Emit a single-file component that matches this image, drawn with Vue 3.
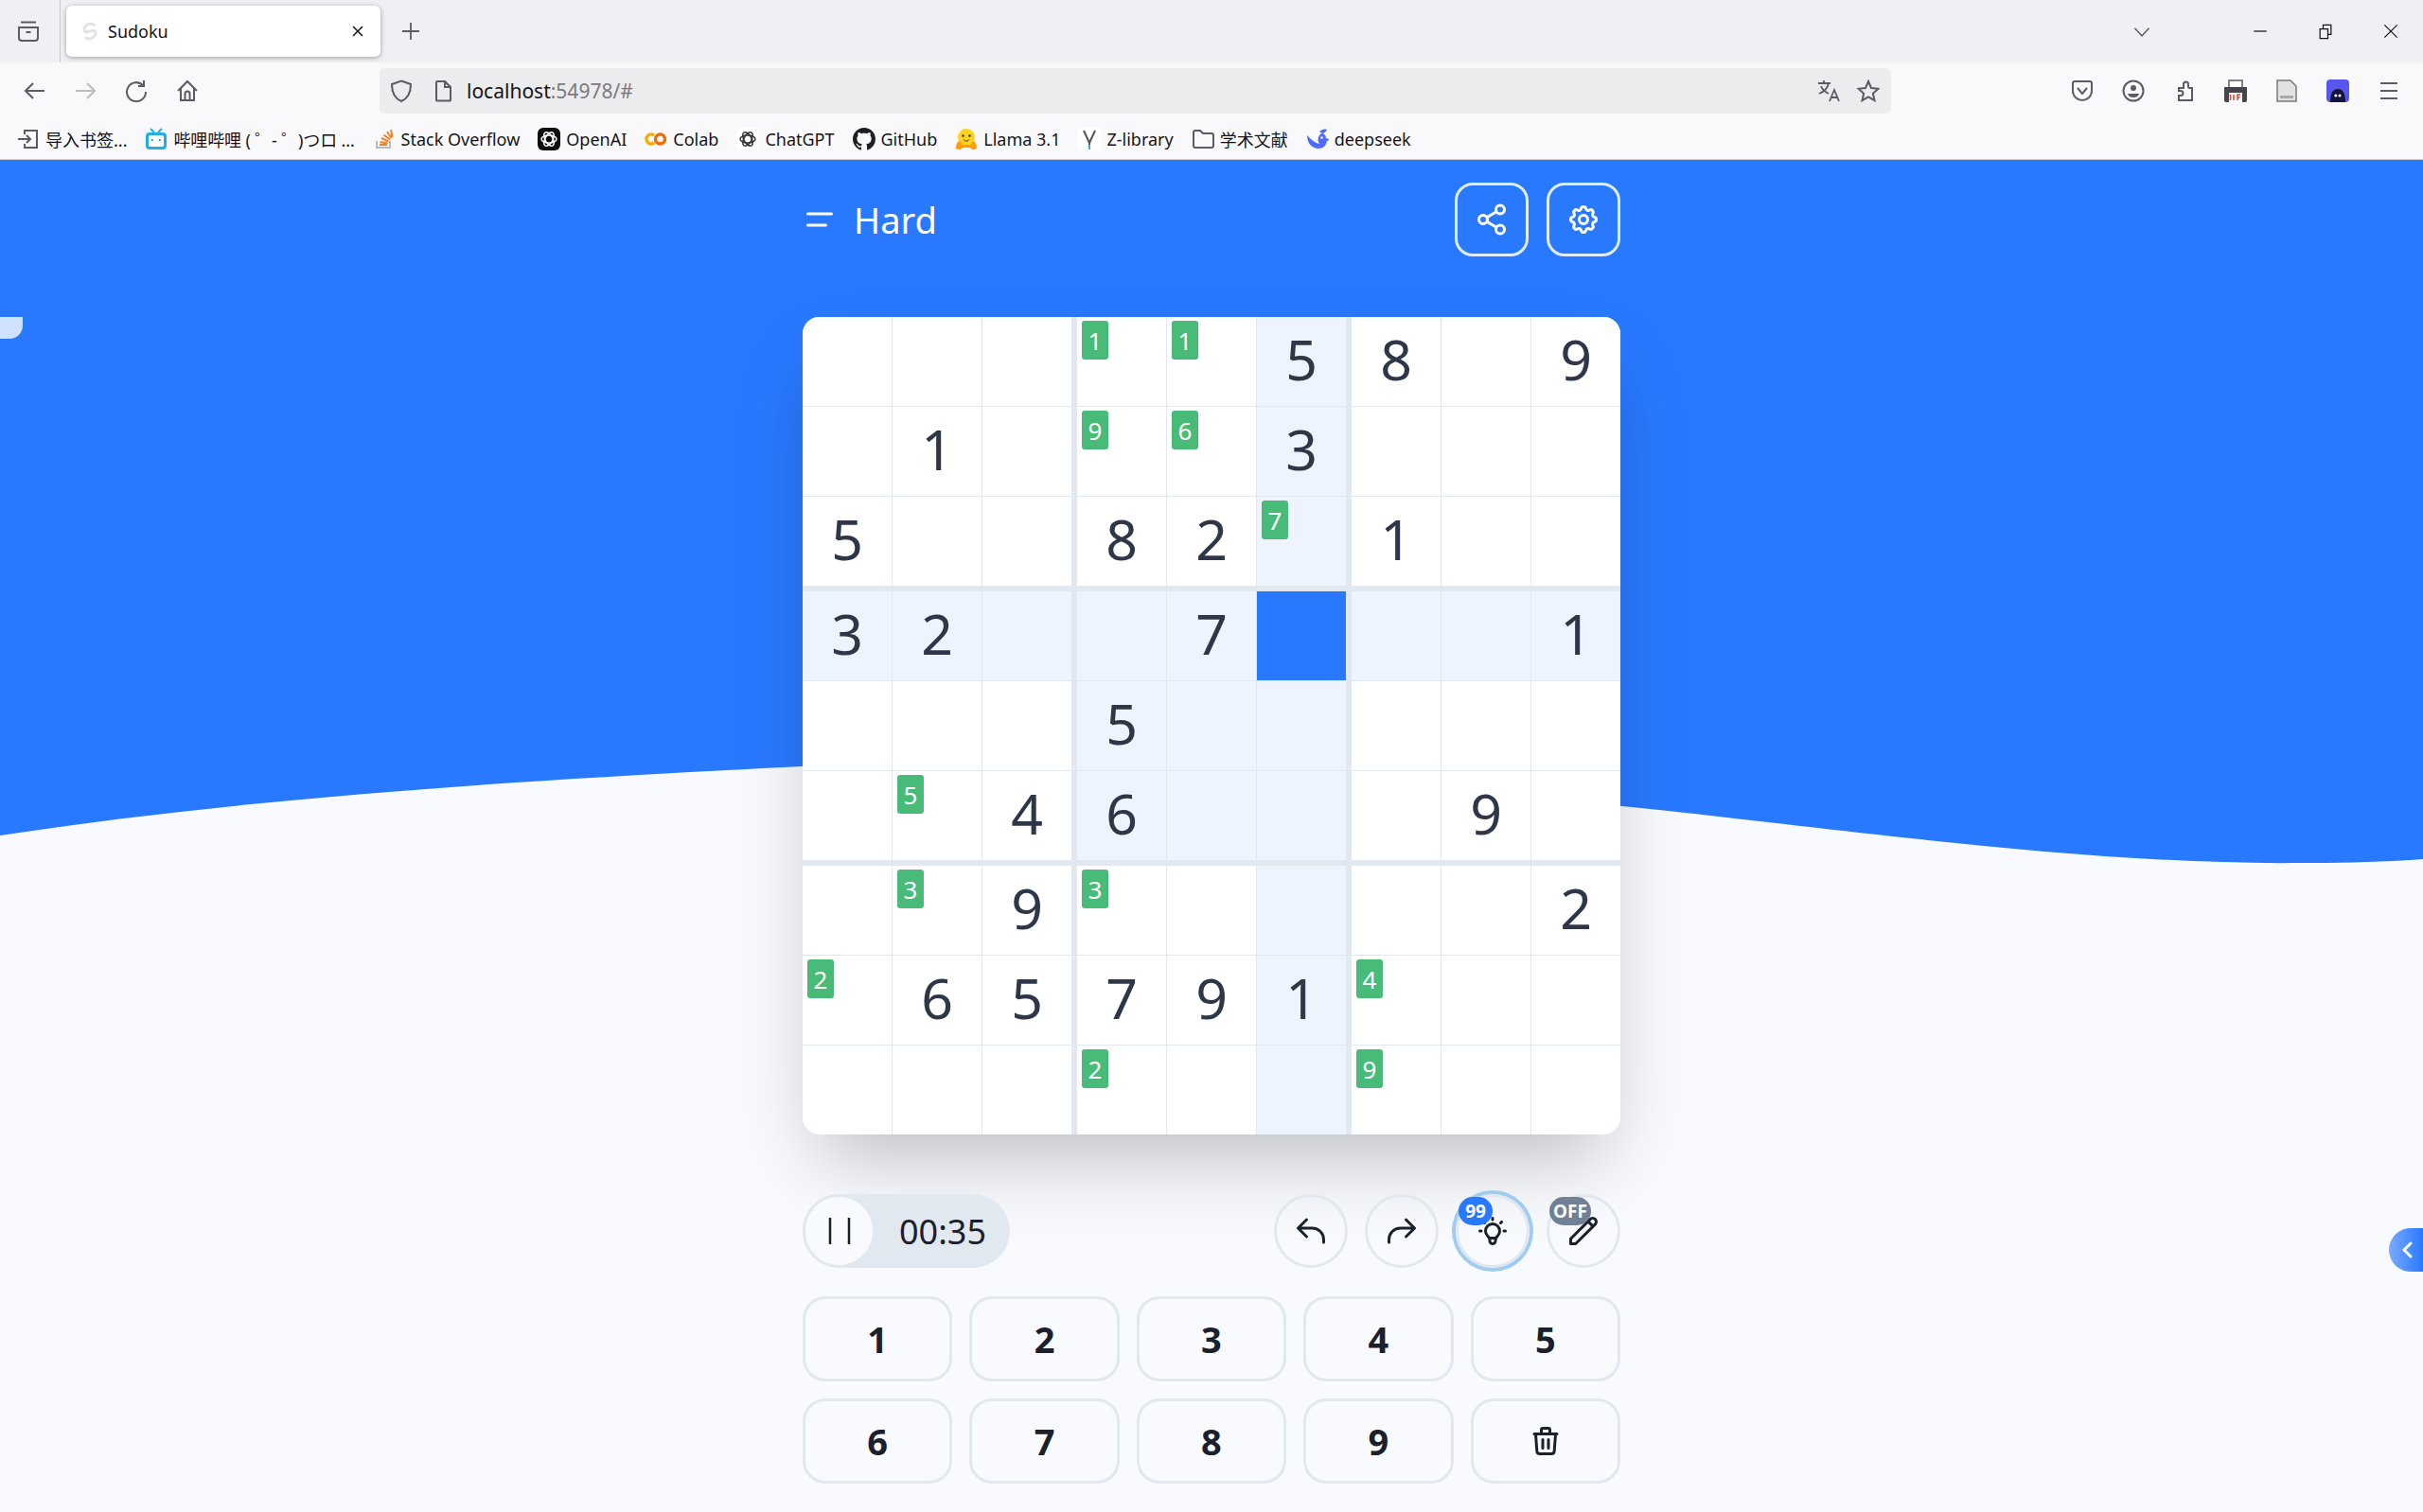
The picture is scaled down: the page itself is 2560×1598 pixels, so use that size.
<template>
  <div class="window">
    <div class="tabstrip">
      <svg class="ico" viewBox="0 0 24 24" fill="none" stroke="#5b5b66" stroke-width="2">
        <path d="M4 2.500h16M2 8h20v11a3 3 0 0 1-3 3H5a3 3 0 0 1-3-3zM9.500 13h5" />
      </svg>
      <div class="divider"></div>
      <div class="tab">
        <svg class="favicon" viewBox="0 0 24 24" fill="none" stroke="#e3e3e6" stroke-width="3.600">
          <path d="M18 5C15 1 10 2 7 5 4 7 4 11 7 13L17 11C20 13 20 17 17 19 14 22 9 23 6 19" />
        </svg>
        <span class="tab-title">Sudoku</span>
        <svg class="tab-close" viewBox="0 0 24 24" fill="none" stroke="#15141a" stroke-width="1.800">
          <path d="M6 6l12 12M18 6 6 18" />
        </svg>
      </div>
      <svg class="ico new-tab" viewBox="0 0 24 24" fill="none" stroke="#5b5b66" stroke-width="1.800">
        <path d="M12 3v18M3 12h18" />
      </svg>
      <div class="spacer"></div>
      <svg class="ico tab-list" viewBox="0 0 24 24" fill="none" stroke="#5b5b66" stroke-width="1.800">
        <path d="M3 8l9 10 9-10" />
      </svg>
      <div class="window-btns">
        <svg class="ico" viewBox="0 0 24 24" fill="none" stroke="#15141a" stroke-width="1.500">
          <path d="M4 12h16" />
        </svg>
        <svg class="ico" viewBox="0 0 24 24" fill="none" stroke="#15141a" stroke-width="1.500">
          <path d="M5 9h10v12H5zM9 9V4h10v12h-4" />
        </svg>
        <svg class="ico" viewBox="0 0 24 24" fill="none" stroke="#15141a" stroke-width="1.500">
          <path d="M4 4l16 16M20 4 4 20" />
        </svg>
      </div>
    </div>

    <div class="toolbar">
      <div class="nav-btns">
        <svg class="ico" viewBox="0 0 24 24" fill="none" stroke="#5b5b66" stroke-width="2">
          <path d="M23 12H3M11 4l-8 8 8 8" />
        </svg>
        <svg class="ico" viewBox="0 0 24 24" fill="none" stroke="#bbbbc0" stroke-width="2">
          <path d="M2 12h20M14 4l8 8-8 8" />
        </svg>
        <svg class="ico" viewBox="0 0 24 24" fill="none" stroke="#5b5b66" stroke-width="2">
          <path d="M19 6A10 10 0 1 0 22 13M20 1v6h-6" />
        </svg>
        <svg class="ico" viewBox="0 0 24 24" fill="none" stroke="#5b5b66" stroke-width="2">
          <path d="M2 12 12 2l10 10M5 9v13h14V9M9.500 22v-7a2.500 2.500 0 0 1 5 0v7" />
        </svg>
      </div>
      <div class="urlbar">
        <svg class="ico" viewBox="0 0 24 24" fill="none" stroke="#5b5b66" stroke-width="2">
          <path d="M12 1.500 22 5c0 9-3 15-10 18C5 20 2 14 2 5z" />
        </svg>
        <svg class="ico page-ico" viewBox="0 0 24 24" fill="none" stroke="#5b5b66" stroke-width="2">
          <path d="M5 3a1 1 0 0 1 1-1h8l6 6v13a1 1 0 0 1-1 1.500H6a1 1 0 0 1-1-1.500zM14 2v6h6" />
        </svg>
        <span class="url"><b>localhost</b>:54978/#</span>
        <div class="spacer"></div>
        <svg class="ico" viewBox="0 0 24 24" fill="none" stroke="#5b5b66" stroke-width="1.800">
          <path d="M1 4h13M7 1v3M12 4c-1 5-5 9-10 11M4 7c1 3 4 6 8 8M13 23l5-12 5 12M15 19h6" />
        </svg>
        <svg class="ico star-ico" viewBox="0 0 24 24" fill="none" stroke="#5b5b66" stroke-width="2">
          <path d="m12 2 3 7 7.500.8-5.600 5 1.600 7.400L12 18.500l-6.500 3.700 1.600-7.400-5.600-5L9 9z" />
        </svg>
      </div>
      <div class="ext-btns">
        <svg class="ico" viewBox="0 0 24 24" fill="none" stroke="#5b5b66" stroke-width="2">
          <path d="M2 4a2 2 0 0 1 2-2h16a2 2 0 0 1 2 2v8c0 6-5 10-10 10S2 18 2 12zM7 9l5 6 5-6" />
        </svg>
        <svg class="ico" viewBox="0 0 24 24" fill="none" stroke="#5b5b66" stroke-width="2">
          <circle cx="12" cy="12" r="10.500" />
          <circle cx="12" cy="9" r="3" fill="#5b5b66" stroke="none" />
          <path d="M6 15h12c-1 3-3 4-6 4s-5-1-6-4z" fill="#5b5b66" stroke="none" />
        </svg>
        <svg class="ico" viewBox="0 0 24 24" fill="none" stroke="#5b5b66" stroke-width="2">
          <path d="M6 9h5V5a2.500 2.500 0 0 1 5 0v3c0 1 .5 1 1.500 1H20v13H6v-5h2a2.500 2.500 0 0 0 0-5H6z" />
        </svg>
        <svg class="ico" viewBox="0 0 24 24">
          <path d="M5 1h14v9H5z" fill="#fff" stroke="#5b5b66" stroke-width="1.500" />
          <path d="M0 8h24v14a2 2 0 0 1-2 2H2a2 2 0 0 1-2-2z" fill="#45454c" />
          <path d="M5 14h14v10H5z" fill="#fff" />
          <path d="M6.500 22v-6M10 22v-6M14 22v-6h3M14 19h2.500" stroke="#e5402f" stroke-width="1.500" fill="none" />
        </svg>
        <svg class="ico" viewBox="0 0 24 24">
          <path d="M2 1h14l6 6v16H2z" fill="#e2e2e4" stroke="#77777f" stroke-width="1.500" />
          <path d="M5 17h14v3H5z" fill="#a9a9ad" />
        </svg>
        <svg class="ico" viewBox="0 0 24 24">
          <rect width="24" height="24" rx="4" fill="#5a55ec" />
          <path d="M4 24c0-10 3-14 8-14s8 4 8 14z" fill="#14143c" />
          <circle cx="9.800" cy="17" r="1.500" fill="#fff" />
          <circle cx="14" cy="17" r="1.500" fill="#fff" />
        </svg>
        <svg class="ico" viewBox="0 0 24 24" fill="none" stroke="#5b5b66" stroke-width="2">
          <path d="M3 4h18M3 12h18M3 20h18" />
        </svg>
      </div>
    </div>

    <div class="bookmarks">
      <div class="bm">
        <svg class="ico" viewBox="0 0 24 24" fill="none" stroke="#5b5b66" stroke-width="2">
          <path d="M8 7V3h13v18H8v-4M1 12h13M10 8l4 4-4 4" />
        </svg>
        <span>导入书签...</span>
      </div>
      <div class="bm">
        <svg class="ico" viewBox="0 0 24 24">
          <path d="M6 1l4 4M18 1l-4 4" stroke="#23ade5" stroke-width="2" />
          <rect x="1" y="5" width="22" height="18" rx="4" fill="#23ade5" />
          <rect x="4" y="8" width="16" height="12" rx="1.500" fill="#fff" />
          <path d="M8 12v2M16 12v2" stroke="#23ade5" stroke-width="2" />
        </svg>
        <span class="bili">哔哩哔哩 ( ゜- ゜)つロ ...</span>
      </div>
      <div class="bm">
        <svg class="ico" viewBox="0 0 24 24" fill="none">
          <path d="M4 14v7h14v-7" stroke="#bcbbbb" stroke-width="2" />
          <path d="M7 18h8M7.500 15l8 1.500M9 11l7.500 3.500M11.500 7.500l6.500 5M15 4l4.500 7M19 2l1.500 8" stroke="#f48024" stroke-width="2" />
        </svg>
        <span>Stack Overflow</span>
      </div>
      <div class="bm">
        <svg class="ico" viewBox="0 0 24 24" fill="none" stroke="#fff" stroke-width="1.500">
          <rect width="24" height="24" rx="6" fill="#0d0d0d" stroke="none" />
          <ellipse cx="12" cy="12" rx="8" ry="4" />
          <ellipse cx="12" cy="12" rx="8" ry="4" transform="rotate(60 12 12)" />
          <ellipse cx="12" cy="12" rx="8" ry="4" transform="rotate(120 12 12)" />
        </svg>
        <span>OpenAI</span>
      </div>
      <div class="bm">
        <svg class="ico" viewBox="0 0 24 24" fill="none" stroke-width="3.500">
          <path d="M10 8a5 5 0 1 0 0 8" stroke="#f9ab00" />
          <circle cx="16.500" cy="12" r="5" stroke="#e8710a" />
        </svg>
        <span>Colab</span>
      </div>
      <div class="bm">
        <svg class="ico" viewBox="0 0 24 24" fill="none" stroke="#333" stroke-width="1.500">
          <rect width="24" height="24" rx="4" fill="#fff" stroke="none" />
          <ellipse cx="12" cy="12" rx="8" ry="4" />
          <ellipse cx="12" cy="12" rx="8" ry="4" transform="rotate(60 12 12)" />
          <ellipse cx="12" cy="12" rx="8" ry="4" transform="rotate(120 12 12)" />
        </svg>
        <span>ChatGPT</span>
      </div>
      <div class="bm">
        <svg class="ico" viewBox="0 0 16 16" fill="#1b1f23">
          <path d="M8 0C3.580 0 0 3.580 0 8c0 3.540 2.290 6.530 5.470 7.590.4.07.55-.17.55-.38 0-.19-.01-.82-.01-1.490-2.010.37-2.530-.49-2.690-.94-.09-.23-.48-.94-.82-1.130-.28-.15-.68-.52-.01-.53.63-.01 1.080.58 1.230.82.72 1.210 1.870.87 2.330.66.07-.52.28-.87.51-1.070-1.780-.2-3.640-.89-3.640-3.950 0-.87.31-1.590.82-2.150-.08-.2-.36-1.020.08-2.120 0 0 .67-.21 2.200.82.64-.18 1.320-.27 2-.27.68 0 1.360.09 2 .27 1.530-1.040 2.200-.82 2.200-.82.44 1.100.16 1.920.08 2.120.51.56.82 1.270.82 2.150 0 3.070-1.870 3.750-3.650 3.950.29.25.54.73.54 1.480 0 1.070-.01 1.930-.01 2.200 0 .21.15.46.55.38A8.013 8.013 0 0016 8c0-4.420-3.580-8-8-8z" />
        </svg>
        <span>GitHub</span>
      </div>
      <div class="bm">
        <svg class="ico" viewBox="0 0 24 24">
          <circle cx="12" cy="10" r="9" fill="#ffd21e" />
          <path d="M1 22c0-5 2-8 4-8l3 4 8 0 3-4c2 0 4 3 4 8-3 2-6 1-7-1H8c-1 2-4 3-7 1z" fill="#ff9d0b" />
          <circle cx="8.500" cy="8.500" r="1.300" fill="#3a3b45" />
          <circle cx="15.500" cy="8.500" r="1.300" fill="#3a3b45" />
          <path d="M9 12.500c1.500 2 4.500 2 6 0" stroke="#3a3b45" fill="none" />
        </svg>
        <span>Llama 3.1</span>
      </div>
      <div class="bm">
        <svg class="ico" viewBox="0 0 24 24" fill="none" stroke-width="2">
          <rect width="24" height="24" rx="2" fill="#fff" />
          <path d="M6 3l6 13 6-13M12 16v2" stroke="#555" />
          <path d="M12 18v5" stroke="#3fa9d0" />
        </svg>
        <span>Z-library</span>
      </div>
      <div class="bm">
        <svg class="ico" viewBox="0 0 24 24" fill="none" stroke="#5b5b66" stroke-width="2">
          <path d="M2 5a2 2 0 0 1 2-2h5l3 3h9a2 2 0 0 1 2 2v11a2 2 0 0 1-2 2H4a2 2 0 0 1-2-2z" />
        </svg>
        <span>学术文献</span>
      </div>
      <div class="bm">
        <svg class="ico" viewBox="0 0 24 24">
          <path d="M1 8c0 9 6 14 12 14 5 0 8-3 9-8 1 0 2-1 2-2l-3-1c0-3-2-5-5-5l-2 2c-2 3-2 6 0 9-5-1-8-4-13-9z" fill="#4d6bfe" />
          <path d="M14 4c2-2 5-3 8-2-1 2-3 4-5 4z" fill="#4d6bfe" />
          <circle cx="16.500" cy="10.500" r="1.200" fill="#fff" />
        </svg>
        <span>deepseek</span>
      </div>
    </div>

    <div class="page">
      <svg class="wave" viewBox="0 1 2560 1429" preserveAspectRatio="none">
        <path d="M0 0H2560V740C2520 743 2470 744 2433 744 2200 747 1900 702 1713 684 1420 607 1100 622 847 642 600 654 280 672 0 715Z" fill="#2979ff" />
      </svg>
      <div class="side-blob"></div>
      <div class="side-tab">
        <svg viewBox="0 0 24 24" fill="none" stroke="#fff" stroke-width="3" stroke-linecap="round" stroke-linejoin="round">
          <path d="M15 5l-7 7 7 7" />
        </svg>
      </div>

      <div class="game">
        <header class="game-head">
          <svg class="menu-ico" viewBox="0 0 28 16" fill="none" stroke="#fff" stroke-width="3" stroke-linecap="round">
            <path d="M1.500 2h25M1.500 14h19" />
          </svg>
          <span class="level">Hard</span>
          <div class="spacer"></div>
          <button class="head-btn">
            <svg viewBox="0 0 24 24" fill="none" stroke="#fff" stroke-width="2">
              <circle cx="18" cy="5" r="3" />
              <circle cx="6" cy="12" r="3" />
              <circle cx="18" cy="19" r="3" />
              <path d="M8.600 13.500l6.800 4M15.400 6.500l-6.800 4" />
            </svg>
          </button>
          <button class="head-btn">
            <svg viewBox="0 0 24 24" fill="none" stroke="#fff" stroke-width="2" stroke-linecap="round" stroke-linejoin="round">
              <path d="M10.325 4.317c.426-1.756 2.924-1.756 3.350 0a1.724 1.724 0 002.573 1.066c1.543-.94 3.310.826 2.370 2.370a1.724 1.724 0 001.065 2.572c1.756.426 1.756 2.924 0 3.350a1.724 1.724 0 00-1.066 2.573c.94 1.543-.826 3.310-2.370 2.370a1.724 1.724 0 00-2.572 1.065c-.426 1.756-2.924 1.756-3.350 0a1.724 1.724 0 00-2.573-1.066c-1.543.94-3.310-.826-2.370-2.370a1.724 1.724 0 00-1.065-2.572c-1.756-.426-1.756-2.924 0-3.350a1.724 1.724 0 001.066-2.573c-.94-1.543.826-3.310 2.370-2.370.996.608 2.296.07 2.572-1.065z" />
              <path d="M15 12a3 3 0 11-6 0 3 3 0 016 0z" />
            </svg>
          </button>
        </header>

        <div class="board">
          <div v-for="(box, b) in boxes" :key="b" class="box">
            <div
              v-for="cell in box"
              :key="cell.key"
              class="cell"
              :class="{ hl: cell.hl, selected: cell.selected }"
            >
              <span v-if="cell.note" class="note">{{ cell.note }}</span>
              <span v-else-if="cell.value">{{ cell.value }}</span>
            </div>
          </div>
        </div>

        <div class="controls">
          <div class="timer">
            <button class="pause">
              <svg viewBox="0 0 24 28" fill="none" stroke="#1a202c" stroke-width="2.500">
                <path d="M2 0v28M22 0v28" />
              </svg>
            </button>
            <span class="time">00:35</span>
          </div>
          <div class="spacer"></div>
          <button class="round">
            <svg viewBox="0 0 24 24" fill="none" stroke="#1a202c" stroke-width="2" stroke-linecap="round" stroke-linejoin="round">
              <path d="M3 10h10a8 8 0 018 8v2M3 10l6 6m-6-6l6-6" />
            </svg>
          </button>
          <button class="round">
            <svg viewBox="0 0 24 24" fill="none" stroke="#1a202c" stroke-width="2" stroke-linecap="round" stroke-linejoin="round">
              <path d="M21 10H11a8 8 0 00-8 8v2M21 10l-6 6m6-6l-6-6" />
            </svg>
          </button>
          <button class="round hint">
            <svg viewBox="0 0 24 24" fill="none" stroke="#1a202c" stroke-width="2" stroke-linecap="round" stroke-linejoin="round">
              <path d="M9.663 17h4.673M12 3v1m6.364 1.636l-.707.707M21 12h-1M4 12H3m3.343-5.657l-.707-.707m2.828 9.900a5 5 0 117.072 0l-.548.547A3.374 3.374 0 0014 18.469V19a2 2 0 11-4 0v-.531c0-.895-.356-1.754-.988-2.386l-.548-.547z" />
            </svg>
            <span class="badge blue">99</span>
          </button>
          <button class="round">
            <svg viewBox="0 0 24 24" fill="none" stroke="#1a202c" stroke-width="2" stroke-linecap="round" stroke-linejoin="round">
              <path d="M15.232 5.232l3.536 3.536m-2.036-5.036a2.500 2.500 0 113.536 3.536L6.500 21.036H3v-3.572L16.732 3.732z" />
            </svg>
            <span class="badge grey">OFF</span>
          </button>
        </div>

        <div class="keypad">
          <button v-for="n in 9" :key="n" class="key">{{ n }}</button>
          <button class="key">
            <svg viewBox="0 0 24 24" fill="none" stroke="#1a202c" stroke-width="2" stroke-linecap="round" stroke-linejoin="round">
              <path d="M19 7l-.867 12.142A2 2 0 0116.138 21H7.862a2 2 0 01-1.995-1.858L5 7m5 4v6m4-6v6m1-10V4a1 1 0 00-1-1h-4a1 1 0 00-1 1v3M4 7h16" />
            </svg>
          </button>
        </div>
      </div>
    </div>
  </div>
</template>

<script setup>
import { computed } from 'vue'

// n = candidate note, digit = filled in, - = empty
const rows = [
  '- - - n1 n1 5 8 - 9',
  '- 1 - n9 n6 3 - - -',
  '5 - - 8 2 n7 1 - -',
  '3 2 - - 7 - - - 1',
  '- - - 5 - - - - -',
  '- n5 4 6 - - - 9 -',
  '- n3 9 n3 - - - - 2',
  'n2 6 5 7 9 1 n4 - -',
  '- - - n2 - - n9 - -'
].map(r => r.split(' '))

const selected = { row: 3, col: 5 }

const boxes = computed(() => {
  const out = Array.from({ length: 9 }, () => [])
  rows.forEach((row, r) => {
    row.forEach((raw, c) => {
      const boxIndex = Math.floor(r / 3) * 3 + Math.floor(c / 3)
      const sameBox =
        Math.floor(r / 3) === Math.floor(selected.row / 3) &&
        Math.floor(c / 3) === Math.floor(selected.col / 3)
      out[boxIndex].push({
        key: `${r}-${c}`,
        value: raw === '-' || raw[0] === 'n' ? '' : raw,
        note: raw[0] === 'n' ? raw.slice(1) : '',
        hl: r === selected.row || c === selected.col || sameBox,
        selected: r === selected.row && c === selected.col
      })
    })
  })
  return out
})
</script>

<style>
body {
  margin: 0;
  background: #f8fafe;
}
</style>

<style scoped>
.window {
  display: flex;
  flex-direction: column;
  width: 2560px;
  height: 1598px;
  overflow: hidden;
  font-family: "Noto Sans", "Noto Sans CJK SC", sans-serif;
  color: #15141a;
}

.ico {
  width: 24px;
  height: 24px;
  flex-shrink: 0;
}

.spacer {
  flex: 1;
}

/* browser chrome */
.tabstrip {
  display: flex;
  align-items: center;
  height: 66px;
  padding: 0 22px 0 18px;
  background: #f0f0f4;
  box-sizing: border-box;
}

.divider {
  width: 1px;
  height: 66px;
  margin-left: 21px;
  background: #c9c9cf;
}

.tab {
  display: flex;
  align-items: center;
  width: 332px;
  height: 54px;
  margin-left: 6px;
  padding: 0 14px 0 15px;
  box-sizing: border-box;
  background: #fff;
  border-radius: 6px;
  box-shadow: 0 1px 5px rgba(0, 0, 0, 0.35);
}

.favicon {
  width: 20px;
  height: 24px;
}

.tab-title {
  margin-left: 9px;
  font-size: 18px;
  flex: 1;
}

.tab-close {
  width: 20px;
  height: 20px;
}

.new-tab {
  margin-left: 20px;
}

.tab-list {
  width: 20px;
  height: 20px;
  margin-right: 103px;
}

.window-btns {
  display: flex;
  gap: 45px;
}

.window-btns .ico {
  width: 20px;
  height: 20px;
  margin: 0 2px;
}

.toolbar {
  display: flex;
  align-items: center;
  height: 60px;
  background: #f9f9fb;
}

.nav-btns {
  display: flex;
  gap: 30px;
  margin-left: 24px;
}

.urlbar {
  display: flex;
  align-items: center;
  width: 1597px;
  height: 48px;
  margin-left: 191px;
  padding: 0 12px 0 11px;
  box-sizing: border-box;
  background: #ececee;
  border-radius: 6px;
}

.page-ico {
  margin-left: 20px;
}

.url {
  margin-left: 13px;
  font-size: 21px;
  color: #7a7a80;
}

.url b {
  font-weight: 400;
  color: #15141a;
}

.star-ico {
  margin-left: 18px;
}

.ext-btns {
  display: flex;
  gap: 30px;
  margin-left: 190px;
}

.bookmarks {
  display: flex;
  align-items: center;
  gap: 19px;
  height: 43px;
  padding: 0 0 1px 18px;
  background: #f9f9fb;
  border-bottom: 1px solid #cfcfd8;
  box-sizing: border-box;
}

.bm {
  display: flex;
  align-items: center;
  gap: 6px;
  font-size: 18px;
  white-space: nowrap;
}

.bili {
  letter-spacing: -0.15px;
}

/* game page */
.page {
  position: relative;
  flex: 1;
  background: #f8fafe;
}

.wave {
  position: absolute;
  inset: 0;
  width: 100%;
  height: 100%;
}

.side-blob {
  position: absolute;
  left: 0;
  top: 166px;
  width: 24px;
  height: 23px;
  background: #d1e2ff;
  border-bottom-right-radius: 14px;
}

.side-tab {
  position: absolute;
  right: 0;
  top: 1129px;
  display: flex;
  align-items: center;
  justify-content: center;
  width: 36px;
  height: 46px;
  padding-left: 4px;
  box-sizing: border-box;
  background: linear-gradient(90deg, #7ba9ff, #2979ff);
  border-radius: 23px 0 0 23px;
}

.side-tab svg {
  width: 24px;
  height: 24px;
}

.game {
  position: relative;
  display: flex;
  flex-direction: column;
  width: 864px;
  margin: 0 auto;
  padding-top: 24px;
}

.game-head {
  display: flex;
  align-items: center;
  gap: 19px;
  height: 78px;
  color: #fff;
}

.menu-ico {
  width: 28px;
  height: 16px;
  margin-left: 4px;
}

.level {
  margin-left: 3px;
  font-size: 38px;
  line-height: 1;
}

.head-btn {
  display: flex;
  align-items: center;
  justify-content: center;
  width: 78px;
  height: 78px;
  padding: 0;
  background: transparent;
  border: 3px solid rgba(255, 255, 255, 0.85);
  border-radius: 19px;
}

.head-btn svg {
  width: 36px;
  height: 36px;
}

.board {
  display: grid;
  grid-template-columns: repeat(3, 284px);
  gap: 6px;
  margin-top: 64px;
  background: #e2e8f0;
  border-radius: 18px;
  overflow: hidden;
  box-shadow: 0 40px 80px -19px rgba(0, 0, 0, 0.25);
}

.box {
  display: grid;
  grid-template-columns: repeat(3, 94px);
  grid-auto-rows: 94px;
  gap: 1px;
  background: #e2e8f0;
}

.cell {
  position: relative;
  display: flex;
  align-items: center;
  justify-content: center;
  padding-bottom: 6px;
  box-sizing: border-box;
  background: #fff;
  font-size: 59px;
  line-height: 1;
  color: #2d3748;
}

.cell.hl {
  background: #edf4fe;
}

.cell.selected {
  background: #2979ff;
}

.note {
  position: absolute;
  left: 5px;
  top: 4px;
  display: flex;
  align-items: center;
  justify-content: center;
  width: 28px;
  height: 41px;
  background: #48bb78;
  border-radius: 3px;
  font-size: 26px;
  color: #fff;
}

.controls {
  display: flex;
  align-items: center;
  gap: 18px;
  height: 78px;
  margin-top: 63px;
}

.timer {
  display: flex;
  align-items: center;
  height: 78px;
  padding-right: 25px;
  background: #e2e8f0;
  border-radius: 39px;
}

.pause {
  display: flex;
  align-items: center;
  justify-content: center;
  width: 77px;
  height: 78px;
  padding: 0;
  background: #f8fafe;
  border: 3px solid #e2e8f0;
  border-radius: 39px;
}

.pause svg {
  width: 24px;
  height: 28px;
}

.time {
  margin-left: 25px;
  font-size: 36px;
  color: #1a202c;
}

.round {
  position: relative;
  display: flex;
  align-items: center;
  justify-content: center;
  width: 78px;
  height: 78px;
  padding: 0;
  background: transparent;
  border: 3px solid #e2e8f0;
  border-radius: 50%;
}

.round svg {
  width: 36px;
  height: 36px;
}

.round.hint {
  box-shadow: 0 0 0 4px #a0ccf0;
}

.badge {
  position: absolute;
  left: 0;
  top: 0;
  height: 30px;
  font-family: "Noto Sans", sans-serif;
  font-size: 19px;
  font-weight: 700;
  line-height: 30px;
  text-align: center;
  color: #fff;
  border-radius: 15px;
}

.badge.blue {
  width: 36px;
  background: #2979ff;
}

.badge.grey {
  width: 44px;
  background: #718096;
}

.keypad {
  display: grid;
  grid-template-columns: repeat(5, 1fr);
  gap: 18px;
  margin-top: 30px;
}

.key {
  display: flex;
  align-items: center;
  justify-content: center;
  height: 90px;
  padding: 0;
  background: transparent;
  border: 3px solid #e2e8f0;
  border-radius: 24px;
  font-family: "Noto Sans", sans-serif;
  font-size: 38px;
  font-weight: 700;
  color: #1a202c;
}

.key svg {
  width: 36px;
  height: 36px;
}
</style>
